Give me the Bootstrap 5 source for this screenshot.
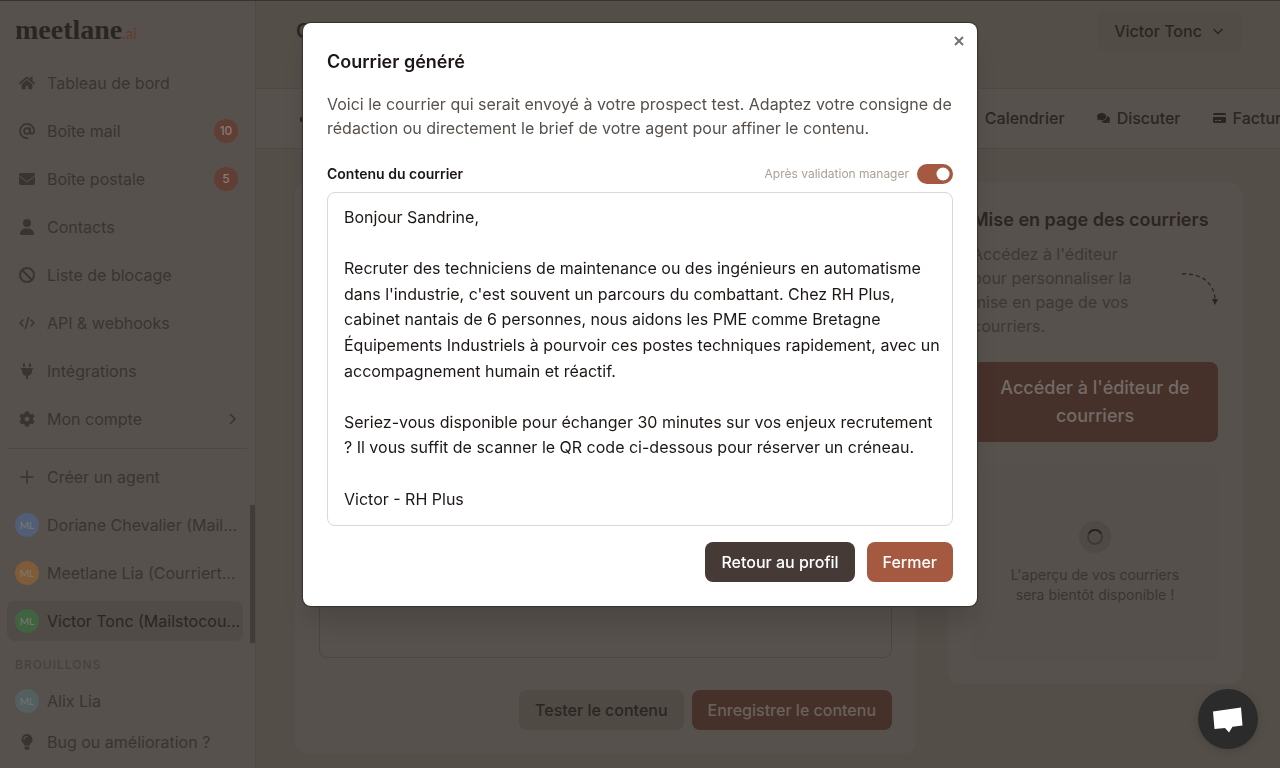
<!DOCTYPE html>
<html lang="fr">
<head>
<meta charset="utf-8">
<meta name="viewport" content="width=device-width, initial-scale=1">
<title>meetlane.ai</title>
<link href="https://cdn.jsdelivr.net/npm/bootstrap@5.3.0/dist/css/bootstrap.min.css" rel="stylesheet">
<style>
:root{--panel:#57514d;--page:#544e49;--ink:#2b2522;--soft:#3a3430;--brick:#a65941;--brick-dim:#46312a}
body{font-family:Inter,"Liberation Sans",sans-serif;font-size:16px;line-height:24px;background:var(--page);color:var(--ink);height:100vh;overflow:hidden}
.shell{height:100vh;border-top:1px solid #393330}
.side{width:256px;background:var(--panel);border-right:1px solid #504a46}
.brand{font-family:"Liberation Serif",serif;font-weight:700;font-size:28px;line-height:32px;padding:13px 15px 0;height:63px;color:var(--ink);text-decoration:none}
.brand span{font-family:Lato,sans-serif;font-size:15px;font-weight:400;color:#63392f}
.side-link{display:flex;align-items:center;gap:8px;height:40px;padding:0 8px;color:var(--soft);text-decoration:none;border-radius:8px;white-space:nowrap}
.side-link.current{background:#514b47;color:var(--ink)}
.side-list{display:flex;flex-direction:column;gap:8px;padding:0 7px}
.side-foot{padding-top:5px;padding-bottom:6px}
.side-ico{width:24px;height:24px;flex:none;display:flex;align-items:center;justify-content:center}
.side-ico svg{width:16px;height:16px}
.avatar{border-radius:50%;font-family:Lato,sans-serif;font-size:10px;color:#7f7974}
.count{width:24px;height:24px;border-radius:50%;background:#603e34;color:#867b75;font-size:12px;font-weight:500;display:flex;align-items:center;justify-content:center;margin-left:auto;margin-right:2px}
.rule{margin:9px 8px 8px;height:1px;background:#4e4844}
.side-scroll{padding:8px 12px 0 7px;overflow:hidden;min-height:0;position:relative}
.thumb{position:absolute;right:0;top:8px;width:5px;height:138px;background:#423c39}
.caption{font-size:12px;font-weight:500;letter-spacing:1px;line-height:16px;padding:0 8px;margin:8px 0;color:#46403c}
.top{height:88px;padding:10px 38px 0 40px;border-bottom:1px solid #4f4945}
.top h1{font-size:20px;font-weight:600;line-height:40px}
.picker{background:#524c47;color:var(--ink);border:0;border-radius:8px;height:40px;width:144px;font-weight:500}
.tabs{height:60px;background:var(--panel);border-bottom:1px solid #4e4844;padding:0 0 2px 42px;overflow:hidden}
.tabs a{color:var(--ink);text-decoration:none;font-weight:500;display:flex;align-items:center;gap:7px}
.tabs-end{gap:32px;margin-right:-39px}
.panel{background:var(--panel);border-radius:12px;padding:24px}
.work{padding:33px 38px 0 39px;gap:32px}
.editor-box{border:1px solid #4c4642;border-radius:8px;background:transparent;resize:none;height:452px;width:100%;display:block}
.action{border:0;border-radius:8px;height:40px;padding:0 16px;font-weight:500}
.action-brick{background:var(--brick);color:#fff}
.action-dark{background:#463a36;color:#fff}
.action-quiet{background:#504a45;color:var(--ink)}
.action-dim{background:var(--brick-dim);color:#69615c}
.action-tall{height:80px;font-size:18px;line-height:28px;color:#736a65}
.aside-col{width:294px}
.panel h2{font-size:18px;font-weight:600;line-height:28px;margin:0 0 8px;white-space:nowrap}
.hint{color:#3d3733}
.hint-arrow{margin-top:30px}
.preview{background:#55504b;height:194px;margin-top:24px;color:var(--soft);font-size:14px;line-height:20px}
.wait{width:32px;height:32px;border-radius:50%;background:#504a46;margin-bottom:12px}
.modal-dialog{max-width:674px;margin:23px auto}
.modal-content{border:0;border-radius:8px;padding:25px 24px 24px;color:#1c1714;box-shadow:0 0 1px 1px #37312e,0 20px 25px -5px rgba(0,0,0,.14)}
.modal-title{font-size:18px;font-weight:600;line-height:28px}
.lead-in{color:#57504b;margin:16px 0 24px}
.close-x{position:absolute;right:10px;top:10px;width:16px;height:16px;border:0;background:none;padding:0;display:flex;align-items:center;justify-content:center}
.field-label{font-size:14px;font-weight:600;line-height:20px}
.form-switch.validation{min-height:0}
.switch-label{font-size:12px;line-height:20px;color:#aaa098}
.form-check-input.toggle{width:36px;height:20px;margin:0;border:0;background-color:var(--brick);background-image:url("data:image/svg+xml,%3csvg xmlns='http://www.w3.org/2000/svg' viewBox='-4 -4 8 8'%3e%3ccircle r='2.6' fill='%23fff'/%3e%3c/svg%3e");cursor:pointer}
.form-check-input.toggle:checked{background-color:var(--brick)}
.letter{border:1px solid #ddd8d4;border-radius:8px;padding:12px 10px 12px 16px;line-height:1.6;height:334px;width:100%;resize:none;display:block;color:#1c1714;overflow:hidden;margin:8px 0 16px}
.modal-actions{gap:12px}
.chat{position:fixed;right:22px;bottom:19px;width:60px;height:60px;border:0;border-radius:50%;background:#2b2b2b;z-index:1100;padding:0;box-shadow:0 2px 8px rgba(0,0,0,.15)}
</style>
</head>
<body>
<div class="shell d-flex">
  <aside class="side d-flex flex-column flex-shrink-0">
    <a class="brand" href="#">meetlane<span>.ai</span></a>
    <nav class="side-list" aria-label="Navigation">
      <a class="side-link" href="#"><span class="side-ico"><svg viewBox="0 0 576 512" fill="currentColor"><path d="M280.37 148.26L96 300.11V464a16 16 0 0 0 16 16l112.06-.29a16 16 0 0 0 15.92-16V368a16 16 0 0 1 16-16h64a16 16 0 0 1 16 16v95.64a16 16 0 0 0 16 16.05L464 480a16 16 0 0 0 16-16V300L295.67 148.26a12.19 12.19 0 0 0-15.3 0zM571.6 251.47L488 182.56V44.05a12 12 0 0 0-12-12h-56a12 12 0 0 0-12 12v72.61L318.47 43a48 48 0 0 0-61 0L4.34 251.47a12 12 0 0 0-1.6 16.9l25.5 31A12 12 0 0 0 45.15 301l235.22-193.74a12.19 12.19 0 0 1 15.3 0L530.9 301a12 12 0 0 0 16.9-1.6l25.5-31a12 12 0 0 0-1.7-16.93z"/></svg></span>Tableau de bord</a>
      <a class="side-link" href="#"><span class="side-ico"><svg viewBox="0 0 24 24" fill="none" stroke="currentColor" stroke-width="2.6" stroke-linecap="round"><circle cx="12" cy="12" r="4.4"/><path d="M16.4 7.6V13a3.1 3.1 0 0 0 6.2 0v-1A10.6 10.6 0 1 0 13 22.6"/></svg></span>Boîte mail<span class="count">10</span></a>
      <a class="side-link" href="#"><span class="side-ico"><svg viewBox="0 0 512 512" fill="currentColor"><path d="M48 64C21.5 64 0 85.5 0 112c0 15.1 7.1 29.3 19.2 38.4L236.8 313.6c11.4 8.5 27 8.5 38.4 0L492.8 150.4c12.1-9.1 19.2-23.3 19.2-38.4c0-26.5-21.5-48-48-48H48zM0 176V384c0 35.3 28.7 64 64 64H448c35.3 0 64-28.7 64-64V176L294.4 339.2c-22.8 17.1-54 17.1-76.8 0L0 176z"/></svg></span>Boîte postale<span class="count">5</span></a>
      <a class="side-link" href="#"><span class="side-ico"><svg viewBox="0 0 448 512" fill="currentColor"><path d="M224 256A128 128 0 1 0 224 0a128 128 0 1 0 0 256zm-45.7 48C79.8 304 0 383.8 0 482.3C0 498.7 13.3 512 29.7 512H418.3c16.4 0 29.7-13.3 29.7-29.7C448 383.8 368.2 304 269.7 304H178.3z"/></svg></span>Contacts</a>
      <a class="side-link" href="#"><span class="side-ico"><svg viewBox="0 0 16 16" fill="none" stroke="currentColor" stroke-width="2"><circle cx="8" cy="8" r="7"/><path d="M3 3l10 10"/></svg></span>Liste de blocage</a>
      <a class="side-link" href="#"><span class="side-ico"><svg viewBox="0 0 16 16" fill="none" stroke="currentColor" stroke-width="1.5" stroke-linecap="round" stroke-linejoin="round"><path d="M4 5L1 8l3 3M12 5l3 3-3 3M9.5 2.5l-3 11"/></svg></span>API &amp; webhooks</a>
      <a class="side-link" href="#"><span class="side-ico"><svg viewBox="0 0 16 16" fill="currentColor"><path d="M4 1.2a1 1 0 0 1 2 0V4H4zM10 1.2a1 1 0 0 1 2 0V4h-2zM2.5 5h11a.7.7 0 0 1 0 1.5H13V8a5 5 0 0 1-4 4.9V15.5a1 1 0 0 1-2 0v-2.6A5 5 0 0 1 3 8V6.5h-.5a.7.7 0 0 1 0-1.5z"/></svg></span>Intégrations</a>
      <a class="side-link" href="#"><span class="side-ico"><svg viewBox="0 0 512 512" fill="currentColor"><path d="M487.4 315.7l-42.6-24.6c4.3-23.2 4.3-47 0-70.2l42.6-24.6c4.9-2.8 7.1-8.6 5.5-14-11.1-35.6-30-67.8-54.7-94.6-3.8-4.1-10-5.1-14.8-2.3L380.8 110c-17.9-15.4-38.5-27.3-60.8-35.1V25.8c0-5.6-3.9-10.5-9.4-11.7-36.7-8.2-74.3-7.8-109.2 0-5.5 1.2-9.4 6.1-9.4 11.7V75c-22.2 7.9-42.8 19.8-60.8 35.1L88.7 85.5c-4.9-2.8-11-1.9-14.8 2.3-24.7 26.7-43.6 58.9-54.7 94.6-1.7 5.4.6 11.2 5.5 14L67.3 221c-4.3 23.2-4.3 47 0 70.2l-42.6 24.6c-4.9 2.8-7.1 8.6-5.5 14 11.1 35.6 30 67.8 54.7 94.6 3.8 4.1 10 5.1 14.8 2.3l42.6-24.6c17.9 15.4 38.5 27.3 60.8 35.1v49.2c0 5.6 3.9 10.5 9.4 11.7 36.7 8.2 74.3 7.8 109.2 0 5.5-1.2 9.4-6.1 9.4-11.7v-49.2c22.2-7.9 42.8-19.8 60.8-35.1l42.6 24.6c4.9 2.8 11 1.9 14.8-2.3 24.7-26.7 43.6-58.9 54.7-94.6 1.5-5.5-.7-11.3-5.6-14.1zM256 336c-44.1 0-80-35.9-80-80s35.9-80 80-80 80 35.9 80 80-35.9 80-80 80z"/></svg></span>Mon compte<svg class="ms-auto" width="12" height="14" viewBox="0 0 12 14" fill="none" stroke="currentColor" stroke-width="1.6"><path d="M2 2l5 5-5 5"/></svg></a>
    </nav>
    <div class="rule"></div>
    <div class="side-list"><a class="side-link" href="#"><span class="side-ico"><svg viewBox="0 0 16 16" stroke="currentColor" stroke-width="1.6"><path d="M8 1.5v13M1.5 8h13"/></svg></span>Créer un agent</a></div>
    <div class="side-scroll flex-grow-1">
      <div class="d-flex flex-column gap-2">
        <a class="side-link" href="#"><span class="side-ico avatar" style="background:#505e78">ML</span>Doriane Chevalier (Mail...</a>
        <a class="side-link" href="#"><span class="side-ico avatar" style="background:#7e5c3a">ML</span>Meetlane Lia (Courriert...</a>
        <a class="side-link current" href="#"><span class="side-ico avatar" style="background:#406340">ML</span>Victor Tonc (Mailstocou...</a>
      </div>
      <div class="caption mt-3">BROUILLONS</div>
      <a class="side-link" href="#"><span class="side-ico avatar" style="background:#54605f;color:#6d7774">ML</span>Alix Lia</a>
      <div class="thumb"></div>
    </div>
    <div class="side-list side-foot"><a class="side-link" href="#"><span class="side-ico"><svg viewBox="0 0 16 16" fill="currentColor"><path fill-rule="evenodd" d="M8 0a5.5 5.5 0 0 1 3.7 9.5c-.6.7-1 1.3-1.2 2h-5c-.2-.7-.6-1.3-1.200-2A5.5 5.5 0 0 1 8 0zM8 2a3.5 3.5 0 0 0-3.5 3.5.5.5 0 0 0 1 0A2.5 2.5 0 0 1 8 3a.5.5 0 0 0 0-1zM5.5 12.5h5v1A2.5 2.5 0 0 1 8 16a2.5 2.5 0 0 1-2.5-2.5z"/></svg></span>Bug ou amélioration ?</a></div>
  </aside>

  <div class="flex-grow-1 overflow-hidden">
    <header class="top d-flex justify-content-between align-items-start">
      <h1 class="m-0">Courriers</h1>
      <button class="picker d-flex align-items-center justify-content-center gap-2" type="button">Victor Tonc <svg width="16" height="16" viewBox="0 0 16 16" fill="none" stroke="currentColor" stroke-width="1.5"><path d="M3.5 6L8 10.500 12.500 6"/></svg></button>
    </header>
    <nav class="tabs d-flex align-items-center justify-content-between" aria-label="Onglets">
      <a href="#" aria-label="Accueil"><svg width="14" height="14" viewBox="0 0 14 14" fill="currentColor"><rect x="2" y="6" width="10" height="5" rx="1"/></svg></a>
      <div class="tabs-end d-flex flex-shrink-0">
        <a href="#">Calendrier</a>
        <a href="#"><svg width="13" height="12" viewBox="0 0 576 512" fill="currentColor"><path d="M416 192c0-88.4-93.1-160-208-160S0 103.6 0 192c0 34.3 14.1 65.9 38 92-13.4 30.2-35.5 54.2-35.8 54.5-2.2 2.3-2.8 5.7-1.5 8.7S4.800 352 8 352c36.6 0 66.900-12.300 88.700-25 32.200 15.700 70.300 25 111.300 25 114.900 0 208-71.600 208-160zm122 220c23.900-26 38-57.700 38-92 0-66.900-53.500-124.200-129.300-148.100.9 6.600 1.300 13.300 1.300 20.100 0 105.900-107.700 192-240 192-10.800 0-21.300-.8-31.700-1.900C207.800 439.600 281.800 480 368 480c41 0 79.100-9.200 111.300-25 21.800 12.700 52.100 25 88.700 25 3.200 0 6.100-1.900 7.300-4.800 1.300-2.900.7-6.300-1.500-8.700-.3-.3-22.400-24.200-35.800-54.500z"/></svg>Discuter</a>
        <a href="#"><svg width="13" height="12" viewBox="0 0 13 12" fill="currentColor"><path fill-rule="evenodd" d="M1.5 1h10A1.5 1.5 0 0 1 13 2.5V3H0v-.5A1.5 1.5 0 0 1 1.5 1zM0 5h13v4.5a1.5 1.5 0 0 1-1.5 1.5h-10A1.5 1.5 0 0 1 0 9.5zM2 8v1h2V8zM5 8v1h3V8z"/></svg>Facturation</a>
      </div>
    </nav>
    <main class="work d-flex align-items-start">
      <section class="panel flex-grow-1">
        <textarea class="editor-box" aria-label="Contenu"></textarea>
        <div class="d-flex justify-content-end gap-2 mt-4 pt-2">
          <button class="action action-quiet" type="button">Tester le contenu</button>
          <button class="action action-dim" type="button">Enregistrer le contenu</button>
        </div>
      </section>
      <section class="panel aside-col flex-shrink-0">
        <h2>Mise en page des courriers</h2>
        <div class="d-flex justify-content-between">
          <p class="hint m-0">Accédez à l'éditeur<br>pour personnaliser la<br>mise en page de vos<br>courriers.</p>
          <svg width="38" height="36" viewBox="0 0 38 36" class="hint-arrow flex-shrink-0" fill="none" stroke="#2b2522" stroke-width="1.3"><path stroke-dasharray="4 3" d="M2 2C20 1 34 10 35 27"/><path fill="#2b2522" stroke="none" d="M32 27h6l-3 6z"/></svg>
        </div>
        <button class="action action-dim action-tall w-100 mt-4 px-4" type="button">Accéder à l'éditeur de courriers</button>
        <div class="preview d-flex flex-column align-items-center justify-content-center text-center">
          <div class="wait d-flex align-items-center justify-content-center"><svg width="16" height="16" viewBox="0 0 16 16" fill="none" stroke-width="1.8"><circle cx="8" cy="8" r="7" stroke="#3e3834"/><path d="M1.9 4.5A7 7 0 0 1 14.1 4.5" stroke="#272220"/></svg></div>
          L'aperçu de vos courriers<br>sera bientôt disponible !
        </div>
      </section>
    </main>
  </div>
</div>

<div class="modal show d-block" tabindex="-1" role="dialog" aria-modal="true" aria-labelledby="letterTitle">
  <div class="modal-dialog">
    <div class="modal-content">
      <button class="close-x" type="button" aria-label="Fermer la fenêtre"><svg width="10" height="10" viewBox="0 0 10 10" stroke="#77716d" stroke-width="2"><path d="M1 1l8 8M9 1L1 9"/></svg></button>
      <h2 class="modal-title" id="letterTitle">Courrier généré</h2>
      <p class="lead-in">Voici le courrier qui serait envoyé à votre prospect test. Adaptez votre consigne de rédaction ou directement le brief de votre agent pour affiner le contenu.</p>
      <div class="d-flex align-items-center justify-content-between">
        <label class="field-label" for="letter">Contenu du courrier</label>
        <div class="form-check form-switch validation d-flex align-items-center gap-2 p-0 m-0">
          <label class="switch-label" for="validated">Après validation manager</label>
          <input class="form-check-input toggle" type="checkbox" role="switch" id="validated" checked>
        </div>
      </div>
      <textarea class="letter" id="letter">Bonjour Sandrine,

Recruter des techniciens de maintenance ou des ingénieurs en automatisme dans l'industrie, c'est souvent un parcours du combattant. Chez RH Plus, cabinet nantais de 6 personnes, nous aidons les PME comme Bretagne Équipements Industriels à pourvoir ces postes techniques rapidement, avec un accompagnement humain et réactif.

Seriez-vous disponible pour échanger 30 minutes sur vos enjeux recrutement ? Il vous suffit de scanner le QR code ci-dessous pour réserver un créneau.

Victor - RH Plus</textarea>
      <div class="modal-actions d-flex justify-content-end">
        <button class="action action-dark" type="button">Retour au profil</button>
        <button class="action action-brick" type="button">Fermer</button>
      </div>
    </div>
  </div>
</div>
<button class="chat" type="button" aria-label="Ouvrir la discussion"><svg class="d-block" width="60" height="60" viewBox="0 0 60 60"><path fill="#fff" d="M15 22.500L43 18.500 44.500 36.500 34.500 37.700 31 43.500 27 39 16.500 40z"/></svg></button>
<script src="https://cdn.jsdelivr.net/npm/bootstrap@5.3.0/dist/js/bootstrap.bundle.min.js"></script>
</body>
</html>
